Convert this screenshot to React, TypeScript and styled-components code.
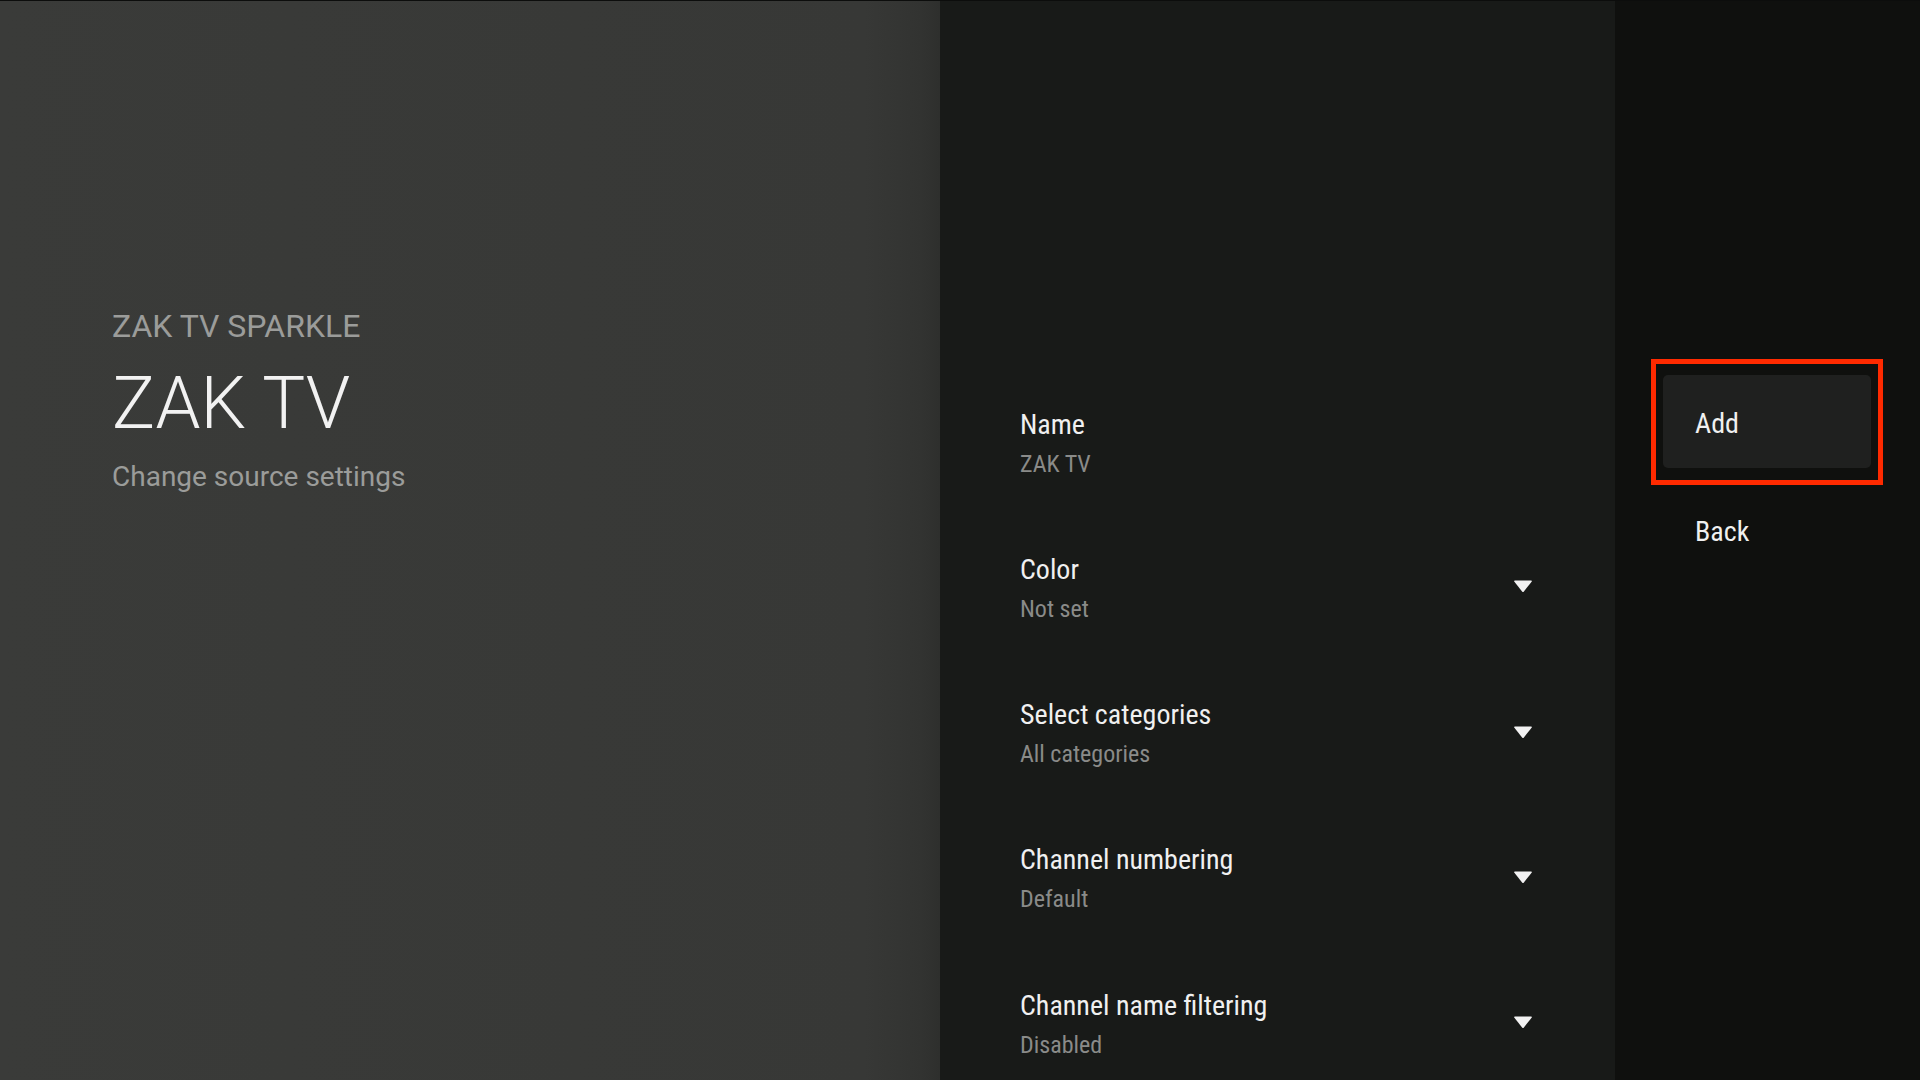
import styled, { createGlobalStyle } from 'styled-components';

const GlobalStyle = createGlobalStyle`
    html, body {
        margin: 0;
        padding: 0;
        background: #0f100e;
    }
    body {
        font-family: Roboto, "Noto Sans", "Liberation Sans", sans-serif;
        -webkit-font-smoothing: antialiased;
    }
`;

const settings = [
    { title: 'Name', value: 'ZAK TV', dropdown: false },
    { title: 'Color', value: 'Not set', dropdown: true },
    { title: 'Select categories', value: 'All categories', dropdown: true },
    { title: 'Channel numbering', value: 'Default', dropdown: true },
    { title: 'Channel name filtering', value: 'Disabled', dropdown: true },
];

const actions = [
    { label: 'Add', focused: true },
    { label: 'Back', focused: false },
];

const Caret = () => (
    <svg width="20" height="14" viewBox="0 0 20 14">
        <path d="M2 1.5 H18 Q19.5 1.5 18.6 2.8 L10.9 12.5 Q10 13.6 9.1 12.5 L1.4 2.8 Q0.5 1.5 2 1.5 Z" fill="#f2f2f2" />
    </svg>
);

const App = () => {
    return (
        <Screen>
            <GlobalStyle />
            <Guidance>
                <Breadcrumb>ZAK TV SPARKLE</Breadcrumb>
                <GuidanceTitle>ZAK TV</GuidanceTitle>
                <GuidanceDescription>Change source settings</GuidanceDescription>
            </Guidance>
            <SettingsList>
                {settings.map(s => (
                    <SettingRow key={s.title}>
                        <SettingText>
                            <SettingTitle>{s.title}</SettingTitle>
                            <SettingValue>{s.value}</SettingValue>
                        </SettingText>
                        {s.dropdown && <CaretBox><Caret /></CaretBox>}
                    </SettingRow>
                ))}
            </SettingsList>
            <ActionList>
                {actions.map(a => (
                    <ActionButton key={a.label} focused={a.focused}>
                        {a.label}
                    </ActionButton>
                ))}
            </ActionList>
        </Screen>
    );
};

export default App;

const Screen = styled.div`
    width: 1920px;
    height: 1080px;
    display: flex;
    overflow: hidden;
    box-sizing: border-box;
    border-top: 1px solid #0c0d0c;
`;

const Guidance = styled.div`
    width: 940px;
    flex-shrink: 0;
    box-sizing: border-box;
    padding: 305px 0 0 112px;
    display: flex;
    flex-direction: column;
    background: linear-gradient(90deg, #3a3b39 0%, #373836 92%, #323331 98%, #2e2f2d 100%);
`;

const Breadcrumb = styled.div`
    font-size: 32px;
    line-height: 40px;
    font-weight: 400;
    color: #9b9c9a;
`;

const GuidanceTitle = styled.div`
    margin-top: 18px;
    font-size: 72px;
    line-height: 80px;
    font-weight: 300;
    color: #f2f2f2;
`;

const GuidanceDescription = styled.div`
    margin-top: 17px;
    font-size: 28px;
    line-height: 32px;
    color: #9b9c9a;
`;

const SettingsList = styled.div`
    width: 675px;
    flex-shrink: 0;
    box-sizing: border-box;
    padding: 370px 82px 0 80px;
    display: flex;
    flex-direction: column;
    background: #181a18;
`;

const SettingRow = styled.div`
    height: 145.25px;
    flex-shrink: 0;
    box-sizing: border-box;
    padding: 37px 0;
    display: flex;
    align-items: center;
    justify-content: space-between;
`;

const SettingText = styled.div`
    display: flex;
    flex-direction: column;
    gap: 8px;
    font-family: "Roboto Condensed", Roboto, sans-serif;
`;

const SettingTitle = styled.div`
    font-size: 28px;
    line-height: 32px;
    font-weight: 400;
    color: #f0f0f0;
`;

const SettingValue = styled.div`
    font-size: 24px;
    line-height: 30px;
    color: #8a8b89;
`;

const CaretBox = styled.div`
    display: flex;
    margin-top: -5px;
`;

const ActionList = styled.div`
    flex: 1;
    box-sizing: border-box;
    padding: 374px 0 0 48px;
    display: flex;
    flex-direction: column;
    gap: 15px;
    background: #0f100e;
`;

const ActionButton = styled.div<{ focused: boolean }>`
    position: relative;
    width: 208px;
    height: 93px;
    box-sizing: border-box;
    padding: 3px 0 0 32px;
    display: flex;
    align-items: center;
    border-radius: 5px;
    background: ${p => (p.focused ? '#1f201f' : 'transparent')};
    font-family: "Roboto Condensed", Roboto, sans-serif;
    font-size: 28px;
    font-weight: 400;
    color: #f0f0f0;
    &::after {
        content: "";
        display: ${p => (p.focused ? 'block' : 'none')};
        position: absolute;
        top: -16px;
        bottom: -17px;
        left: -12px;
        right: -12px;
        border: 5px solid #ff2a00;
    }
`;
